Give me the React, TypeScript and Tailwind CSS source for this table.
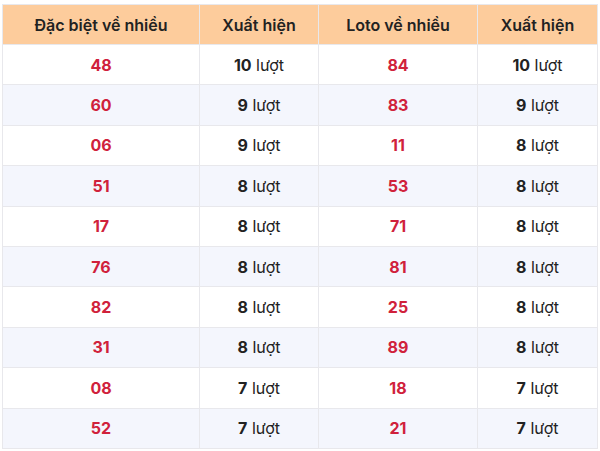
const rows: [string, number, string, number][] = [
  ['48', 10, '84', 10],
  ['60', 9, '83', 9],
  ['06', 9, '11', 8],
  ['51', 8, '53', 8],
  ['17', 8, '71', 8],
  ['76', 8, '81', 8],
  ['82', 8, '25', 8],
  ['31', 8, '89', 8],
  ['08', 7, '18', 7],
  ['52', 7, '21', 7],
]

export default function App() {
  return (
    <div className="w-[600px] h-[451px] bg-white pt-[4px] pl-[2px]" style={{ fontFamily: 'Inter, "Noto Sans", sans-serif' }}>
      <table className="table-fixed border-collapse w-[595px] text-[16px] text-[#222]">
        <colgroup>
          <col className="w-[197px]" />
          <col className="w-[119px]" />
          <col className="w-[159px]" />
          <col className="w-[120px]" />
        </colgroup>
        <thead>
          <tr className="bg-[#fdcc9c] h-[40px]">
            <th className="border border-[#e8e8ec] font-semibold">Đặc biệt về nhiều</th>
            <th className="border border-[#e8e8ec] font-semibold">Xuất hiện</th>
            <th className="border border-[#e8e8ec] font-semibold">Loto về nhiều</th>
            <th className="border border-[#e8e8ec] font-semibold">Xuất hiện</th>
          </tr>
        </thead>
        <tbody>
          {rows.map(([a, ac, b, bc], i) => (
            <tr key={i} className={i % 2 === 1 ? 'bg-[#f4f6fd] h-[40.4px]' : 'bg-white h-[40.4px]'}>
              <td className="border border-[#e8e8ec] text-center font-bold text-[#d0213b]">{a}</td>
              <td className="border border-[#e8e8ec] text-center">
                <span className="font-bold">{ac}</span> lượt
              </td>
              <td className="border border-[#e8e8ec] text-center font-bold text-[#d0213b]">{b}</td>
              <td className="border border-[#e8e8ec] text-center">
                <span className="font-bold">{bc}</span> lượt
              </td>
            </tr>
          ))}
        </tbody>
      </table>
    </div>
  )
}
